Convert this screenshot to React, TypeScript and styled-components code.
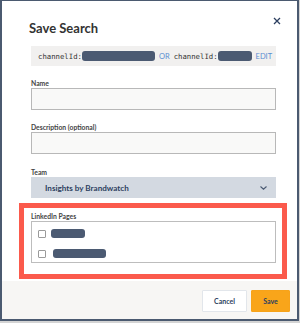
import React from "react";
import styled, { createGlobalStyle } from "styled-components";

const Global = createGlobalStyle`
  * { box-sizing: border-box; }
  html, body { margin: 0; padding: 0; background: #d4d4d4; }
  body { font-family: "Lato", "Open Sans", sans-serif; }
`;

const Screen = styled.div`
  width: 300px;
  height: 323px;
  padding: 0 1px 2px 0;
  background: #d4d4d4;
`;

const Modal = styled.div`
  width: 299px;
  height: 321px;
  border-style: solid;
  border-color: #4b5a70;
  border-width: 1px 2px 2px 2px;
  background: #ffffff;
  display: flex;
  flex-direction: column;
`;

const Body = styled.div`
  flex: 1;
  padding: 0 0 0 27px;
  display: flex;
  flex-direction: column;
`;

const Header = styled.div`
  display: flex;
  align-items: flex-start;
  justify-content: space-between;
  padding: 20px 14px 0 0;
  height: 45px;
`;

const Title = styled.h1`
  margin: 0;
  font-family: "Lato", sans-serif;
  font-weight: 700;
  font-size: 13px;
  line-height: 14px;
  color: #333;
`;

const Close = styled.button`
  border: 0;
  background: none;
  padding: 0;
  margin-top: -4px;
  width: 10px;
  height: 10px;
  display: flex;
  cursor: pointer;
`;

const Query = styled.div`
  margin-left: 2px;
  width: 245px;
  height: 20px;
  background: #f1f0ef;
  display: flex;
  align-items: center;
  padding-left: 7px;
  font-family: "DejaVu Sans Mono", "Liberation Mono", monospace;
  font-size: 7.3px;
  color: #333;
  white-space: nowrap;
`;

const Redacted = styled.span<{ w: number; h?: number }>`
  display: inline-block;
  width: ${(p) => p.w}px;
  height: ${(p) => p.h ?? 10}px;
  border-radius: 3px;
  background: #4b5a72;
`;

const Keyword = styled.span<{ gap?: number }>`
  font-family: "Lato", sans-serif;
  font-size: 7.5px;
  color: #5b8ed1;
  margin: 0 ${(p) => p.gap ?? 4}px 0 4px;
`;

const Field = styled.div<{ top: number }>`
  margin-top: ${(p) => p.top}px;
  margin-left: 2px;
  width: 245px;
  display: flex;
  flex-direction: column;
`;

const Label = styled.label`
  font-family: "Lato", sans-serif;
  font-weight: 700;
  font-size: 6.8px;
  line-height: 7px;
  color: #444;
  margin-bottom: 1px;
  height: 7px;
`;

const Input = styled.div`
  height: 22px;
  background: #f9f9f8;
  border: 1px solid #b8b8b8;
`;

const Select = styled.div`
  height: 21px;
  background: #d3d9e1;
  display: flex;
  align-items: center;
  justify-content: space-between;
  padding: 0 9px 0 14px;
  font-family: "Lato", sans-serif;
  font-weight: 700;
  font-size: 8.1px;
  color: #2c3f60;
`;

const Highlight = styled.div`
  margin-top: 5px;
  margin-left: -10px;
  width: 268px;
  height: 76px;
  border: 5px solid #fb5a4c;
  padding: 5px 0 0 7px;
  display: flex;
  flex-direction: column;
`;

const PagesBox = styled.div`
  width: 245px;
  height: 42px;
  border: 1px solid #bdbdbd;
  display: flex;
  flex-direction: column;
  gap: 11px;
  padding: 7px 0 0 6px;
`;

const Option = styled.div<{ barLeft: number }>`
  display: flex;
  align-items: center;
  gap: ${(p) => p.barLeft}px;
  height: 9px;
`;

const Check = styled.span`
  width: 8px;
  height: 8px;
  border: 1px solid #9a9a9a;
  border-radius: 1px;
  background: #fff;
`;

const Footer = styled.div`
  height: 38px;
  background: #f7f6f4;
  display: flex;
  justify-content: flex-end;
  align-items: flex-start;
  gap: 4px;
  padding: 9px 7px 0 0;
`;

const Button = styled.button<{ primary?: boolean }>`
  height: 22px;
  width: ${(p) => (p.primary ? 39 : 45)}px;
  border: 1px solid ${(p) => (p.primary ? "#f7a31a" : "#e2e6eb")};
  background: ${(p) => (p.primary ? "#f9a51a" : "#ffffff")};
  border-radius: 1px;
  font-family: "Lato", sans-serif;
  font-weight: 700;
  font-size: 7px;
  color: #2c3f60;
  padding: 0;
`;

export default function App() {
  return (
    <Screen>
      <Global />
      <Modal>
        <Body>
          <Header>
            <Title>Save Search</Title>
            <Close aria-label="Close">
              <svg width="8" height="8" viewBox="0 0 8 8">
                <path d="M1 1L7 7M7 1L1 7" stroke="#2c3f60" strokeWidth="1.3" />
              </svg>
            </Close>
          </Header>
          <Query>
            channelId:<Redacted w={73} />
            <Keyword>OR</Keyword>
            channelId:<Redacted w={34} />
            <Keyword gap={0}>EDIT</Keyword>
          </Query>
          <Field top={14}>
            <Label>Name</Label>
            <Input />
          </Field>
          <Field top={14}>
            <Label>Description (optional)</Label>
            <Input />
          </Field>
          <Field top={15}>
            <Label>Team</Label>
            <Select>
              <span>Insights by Brandwatch</span>
              <svg width="7" height="4" viewBox="0 0 7 4">
                <path d="M0.5 0.5L3.5 3.2L6.5 0.5" stroke="#4a5a72" strokeWidth="1.1" fill="none" />
              </svg>
            </Select>
          </Field>
          <Highlight>
            <Label>LinkedIn Pages</Label>
            <PagesBox>
              <Option barLeft={5}>
                <Check />
                <Redacted w={34} h={9} />
              </Option>
              <Option barLeft={7}>
                <Check />
                <Redacted w={53} h={9} />
              </Option>
            </PagesBox>
          </Highlight>
        </Body>
        <Footer>
          <Button>Cancel</Button>
          <Button primary>Save</Button>
        </Footer>
      </Modal>
    </Screen>
  );
}
